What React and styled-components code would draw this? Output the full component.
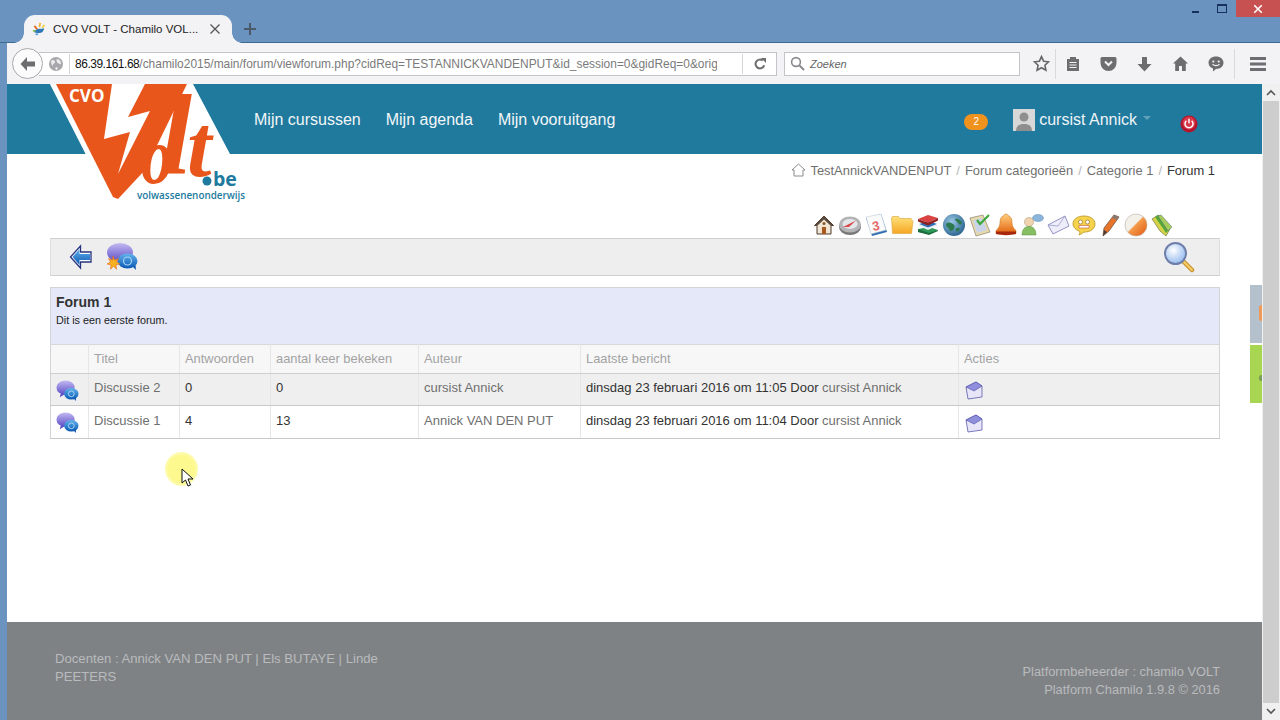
import React from 'react';
import styled, { createGlobalStyle } from 'styled-components';

const GlobalStyle = createGlobalStyle`
  html, body {
    margin: 0;
    height: 100%;
    overflow: hidden;
    font-family: "Liberation Sans", Arial, sans-serif;
  }
`;

const Window = styled.div`
  position: relative;
  display: flex;
  flex-direction: column;
  width: 1280px;
  height: 720px;
  overflow: hidden;
  background: #6b93bf;
`;

const TitleBar = styled.div`
  display: flex;
  align-items: flex-end;
  height: 43px;
  padding-left: 7px;
  position: relative;
  border-bottom: 1px solid #3f6a8f;
  box-sizing: border-box;
`;

const Tab = styled.div`
  position: relative;
  display: flex;
  align-items: center;
  gap: 7px;
  box-sizing: border-box;
  width: 208px;
  height: 28px;
  margin-left: 17px;
  margin-bottom: -1px;
  padding: 0 11px 0 8px;
  background: #f3f3f6;
  border-radius: 11px 11px 0 0;
  font-size: 11.5px;
  color: #222;
  white-space: nowrap;

  &::before,
  &::after {
    content: '';
    position: absolute;
    bottom: 0;
    width: 10px;
    height: 10px;
  }

  &::before {
    left: -10px;
    background: radial-gradient(circle at 0 0, transparent 9.5px, #f3f3f6 10px);
  }

  &::after {
    right: -10px;
    background: radial-gradient(circle at 100% 0, transparent 9.5px, #f3f3f6 10px);
  }
`;

const TabTitle = styled.span`
  flex: 1;
`;

const NewTab = styled.div`
  display: flex;
  align-items: center;
  justify-content: center;
  width: 20px;
  height: 28px;
  margin-left: 8px;
  margin-bottom: -1px;
`;

const WindowControls = styled.div`
  position: absolute;
  top: 0;
  right: 0;
  display: flex;
  align-items: flex-start;
`;

const WindowButton = styled.div`
  display: flex;
  align-items: center;
  justify-content: center;
  width: ${props => props.$wide ? '44px' : '27px'};
  height: 17px;
  background: ${props => props.$wide ? '#c75050' : 'transparent'};
`;

const Toolbar = styled.div`
  display: flex;
  align-items: center;
  height: 41px;
  margin-left: 7px;
  padding-left: 5px;
  background: #f3f3f6;
  box-sizing: border-box;
  flex-shrink: 0;
`;

const BackButton = styled.div`
  display: flex;
  align-items: center;
  justify-content: center;
  width: 31px;
  height: 31px;
  flex-shrink: 0;
  box-sizing: border-box;
  border: 1px solid #a9a9ad;
  border-radius: 50%;
  background: #fbfbfc;
  z-index: 1;
`;

const UrlBar = styled.div`
  display: flex;
  align-items: center;
  box-sizing: border-box;
  width: 738px;
  height: 24px;
  flex-shrink: 0;
  margin-left: -4px;
  padding-left: 10px;
  background: #fff;
  border: 1px solid #c4c4c8;
  border-left: 0;
`;

const UrlText = styled.div`
  flex: 1;
  min-width: 0;
  margin-left: 6px;
  padding: 0 25px 0 5px;
  border-left: 1px solid #d5d5d8;
  height: 20px;
  line-height: 20px;
  font-size: 11.95px;
  color: #7a7a7a;
  white-space: nowrap;
  overflow: hidden;
`;

const UrlClip = styled.div`
  overflow: hidden;
`;

const UrlHost = styled.span`
  color: #111;
  letter-spacing: -0.45px;
`;

const Reload = styled.div`
  display: flex;
  align-items: center;
  justify-content: center;
  width: 33px;
  height: 20px;
  flex-shrink: 0;
  border-left: 1px solid #d5d5d8;
`;

const SearchBox = styled.div`
  display: flex;
  align-items: center;
  gap: 5px;
  box-sizing: border-box;
  width: 236px;
  height: 24px;
  flex-shrink: 0;
  margin-left: 7px;
  padding-left: 5px;
  background: #fff;
  border: 1px solid #c4c4c8;
  font-size: 11px;
  font-style: italic;
  color: #666;
`;

const ToolIcons = styled.div`
  display: flex;
  align-items: center;
  flex-shrink: 0;
  margin-left: 7px;
`;

const ToolIcon = styled.div`
  display: flex;
  align-items: center;
  justify-content: center;
  width: ${props => props.$w || 36}px;
  height: 30px;
  border-left: ${props => props.$sep ? '1px solid #d9d9dc' : '0'};
  box-sizing: border-box;
`;

const Content = styled.div`
  display: flex;
  flex: 1;
  min-height: 0;
  margin-left: 7px;
`;

const Page = styled.div`
  position: relative;
  display: flex;
  flex-direction: column;
  flex: 1;
  min-width: 0;
  background: #fff;
`;

const Nav = styled.nav`
  display: flex;
  align-items: center;
  box-sizing: border-box;
  height: 70px;
  flex-shrink: 0;
  padding: 2px 0 0 247px;
  background: #207a9e;
  color: #fff;
`;

const NavLink = styled.a`
  margin-right: 25px;
  font-size: 16px;
  color: #f2f6f8;
`;

const NavRight = styled.div`
  display: flex;
  align-items: center;
  margin-left: auto;
  margin-right: 64px;
  height: 24px;
`;

const Badge = styled.span`
  display: flex;
  align-items: center;
  justify-content: center;
  width: 24px;
  height: 16px;
  margin-right: 25px;
  margin-top: 3px;
  border-radius: 8px;
  background: #f0921e;
  font-size: 10px;
  color: #fff;
`;

const Avatar = styled.div`
  display: flex;
  align-items: flex-end;
  justify-content: center;
  width: 22px;
  height: 22px;
  overflow: hidden;
  background: #d8d8d8;
  margin-right: 4px;
`;

const UserName = styled.span`
  font-size: 16px;
  color: #eef4f7;
`;

const Caret = styled.span`
  width: 0;
  height: 0;
  margin: 0 29px 4px 6px;
  border: 4px solid transparent;
  border-top-color: #5f9fb9;
  border-bottom: 0;
`;

const PowerButton = styled.div`
  display: flex;
  margin-top: 7px;
`;

const LogoLink = styled.a`
  position: absolute;
  left: 43px;
  top: 0;
  display: block;
  line-height: 0;
`;

const Main = styled.main`
  display: flex;
  flex-direction: column;
  flex: 1;
  padding: 0 42px 0 43px;
`;

const Breadcrumb = styled.div`
  display: flex;
  align-items: center;
  justify-content: flex-end;
  height: 32px;
  padding-right: 5px;
  font-size: 12.9px;
  color: #6f6f6f;
`;

const CrumbHome = styled.svg`
  margin-right: 4px;
`;

const Crumb = styled.span`
  color: ${props => props.$active ? '#333' : '#6f6f6f'};
`;

const CrumbSep = styled.span`
  margin: 0 5px;
  color: #b5b5b5;
`;

const CourseTools = styled.div`
  display: flex;
  justify-content: flex-end;
  gap: 2px;
  margin-top: 27px;
  height: 25px;
  padding-right: 46px;
`;

const ActionBar = styled.div`
  display: flex;
  align-items: center;
  height: 38px;
  box-sizing: border-box;
  padding: 0 24px 0 18px;
  gap: 12px;
  background: #eeeeef;
  border: 1px solid #cfcfcf;
  border-left-color: #dedede;
  border-right-color: #dedede;
`;

const ActionSearch = styled.div`
  margin-left: auto;
  display: flex;
`;

const ForumHead = styled.div`
  box-sizing: border-box;
  height: 57px;
  margin-top: 11px;
  padding: 6px 5px;
  background: #e4e8f8;
  border: 1px solid #d4d4d8;
  border-bottom: 0;
`;

const ForumTitle = styled.div`
  font-size: 14px;
  font-weight: bold;
  line-height: 16px;
  color: #333;
`;

const ForumText = styled.div`
  margin-top: 4px;
  font-size: 10.8px;
  line-height: 12px;
  color: #222;
`;

const Table = styled.table`
  width: calc(100% - 1px);
  table-layout: fixed;
  border-collapse: collapse;
  font-size: 13px;
`;

const Th = styled.th`
  box-sizing: border-box;
  height: 29px;
  padding: 0 5px 2px;
  text-align: left;
  font-weight: normal;
  font-size: 12.9px;
  color: #a3a3a3;
  background: #f7f7f8;
  border: 1px solid #e6e6e6;
  border-top: 1px solid #d8d8dc;
  border-bottom: 1px solid #cfcfcf;
  white-space: nowrap;
  &:first-child { border-left: 1px solid #d4d4d8; }
  &:last-child { border-right: 1px solid #d4d4d8; }
`;

const Tr = styled.tr`
  background: ${props => props.$odd ? '#efefef' : '#ffffff'};
`;

const Td = styled.td`
  box-sizing: border-box;
  height: ${props => props.$h}px;
  padding: 0 5px 4px;
  color: ${props => props.$link ? '#6f6f6f' : '#333'};
  border: 1px solid #e6e6e6;
  border-bottom: 1px solid #c9c9c9;
  white-space: nowrap;
  &:first-child { border-left: 1px solid #d4d4d8; }
  &:last-child { border-right: 1px solid #d4d4d8; }
`;

const MutedLink = styled.span`
  color: #6f6f6f;
`;

const RowIcon = styled.div`
  display: flex;
  margin-top: 3px;
  margin-bottom: -2px;
  margin-left: ${props => props.$ml || 0}px;
`;

const Footer = styled.footer`
  display: flex;
  justify-content: space-between;
  height: 98px;
  flex-shrink: 0;
  box-sizing: border-box;
  padding: 28px 42px 0 48px;
  background: #7f8285;
  line-height: 18px;
  color: #b9bbbd;
`;

const FooterLeft = styled.div`
  width: 340px;
  font-size: 13.15px;
`;

const FooterRight = styled.div`
  margin-top: 13px;
  font-size: 12.85px;
  text-align: right;
`;

const SideTab = styled.div`
  position: absolute;
  right: 0;
  top: ${props => props.$top}px;
  width: 12px;
  height: 58px;
  overflow: hidden;
  background: ${props => props.$bg};
`;

const SideMark = styled.div`
  position: absolute;
  left: 9px;
  top: ${props => props.$top}px;
  width: 5px;
  height: ${props => props.$h}px;
  border-radius: 3px;
  background: ${props => props.$bg};
`;

const Scrollbar = styled.div`
  display: flex;
  flex-direction: column;
  width: 18px;
  flex-shrink: 0;
  background: #f0f0f0;
`;

const ScrollArrow = styled.div`
  display: flex;
  align-items: center;
  justify-content: center;
  height: 17px;
  flex-shrink: 0;
  background: #f0f0f0;
`;

const ScrollThumb = styled.div`
  flex: 1;
  margin: 0 1px;
  background: #cdcdcd;
`;

const Highlight = styled.div`
  position: absolute;
  left: 165px;
  top: 452px;
  width: 33px;
  height: 34px;
  border-radius: 50%;
  background: radial-gradient(circle, #fdf98e 0%, #fdf98e 55%, rgba(253, 249, 142, 0) 100%);
`;

const Pointer = styled.svg`
  position: absolute;
  left: 181px;
  top: 468px;
`;

const HiddenDefs = styled.svg`
  position: absolute;
  width: 0;
  height: 0;
`;

const Defs = () => (
  <HiddenDefs aria-hidden="true">
    <defs>
      <linearGradient id="purple" x1="0" y1="0" x2="0" y2="1">
        <stop offset="0" stopColor="#c3b9f3" />
        <stop offset="1" stopColor="#5b4ec4" />
      </linearGradient>
      <linearGradient id="blue" x1="0" y1="0" x2="0" y2="1">
        <stop offset="0" stopColor="#62b2ec" />
        <stop offset="1" stopColor="#0b58b4" />
      </linearGradient>
      <radialGradient id="globe" cx="0.4" cy="0.35" r="0.75">
        <stop offset="0" stopColor="#9cc8e6" />
        <stop offset="1" stopColor="#1f5a86" />
      </radialGradient>
      <radialGradient id="lens" cx="0.4" cy="0.35" r="0.7">
        <stop offset="0" stopColor="#ffffff" />
        <stop offset="1" stopColor="#8fb6ee" />
      </radialGradient>
      <linearGradient id="folder" x1="0" y1="0" x2="0" y2="1">
        <stop offset="0" stopColor="#ffe27a" />
        <stop offset="1" stopColor="#f5a623" />
      </linearGradient>
      <linearGradient id="bell" x1="0" y1="0" x2="0" y2="1">
        <stop offset="0" stopColor="#ffd080" />
        <stop offset="1" stopColor="#e2630f" />
      </linearGradient>
      <linearGradient id="ball" x1="0" y1="0" x2="1" y2="1">
        <stop offset="0.45" stopColor="#f3efe9" />
        <stop offset="0.5" stopColor="#f39a4a" />
        <stop offset="1" stopColor="#e2570f" />
      </linearGradient>
    </defs>
  </HiddenDefs>
);

const Logo = () => (
  <svg width="200" height="120" viewBox="0 0 200 120">
    <polygon points="0,0 143,0 180,70 63,70 63,118" fill="#fff" />
    <polygon points="0,0 60,118 63,70" fill="#fff" />
    <polygon points="6,0 137,0 95,86 68,115 63,113" fill="#e8561c" />
    <polygon points="62,0 95,0 78,33 100,27 68,90 80,48 54,55" fill="#fff" />
    <text x="19" y="18" fontFamily="'Open Sans', sans-serif" fontWeight="700" fontSize="17" fill="#fff">CVO</text>
    <ellipse cx="109" cy="81" rx="9" ry="15" fill="#fff" transform="rotate(12 109 81)" />
    <g fontFamily="'Liberation Serif', serif" fontStyle="italic" fill="#e8561c">
      <text transform="translate(91 99) scale(0.8 1)" fontWeight="700" fontSize="80">o</text>
      <text x="110" y="90" fontWeight="700" fontSize="115">l</text>
      <text x="137" y="92" fontWeight="700" fontSize="88">t</text>
    </g>
    <circle cx="157" cy="97" r="4.5" fill="#207a9e" />
    <text x="163" y="102" fontFamily="'Open Sans', sans-serif" fontWeight="700" fontSize="19.5" fill="#207a9e">be</text>
    <text x="87" y="115" fontFamily="'Open Sans', sans-serif" fontWeight="600" fontSize="9.9" fill="#207a9e">volwassenenonderwijs</text>
  </svg>
);

const Favicon = () => (
  <svg width="14" height="14" viewBox="0 0 16 16">
    <path d="M2 11c2-3 6-4 9-3 1-1 2-1 3 0-1 1-1 3-3 4-3 1-6 1-9-1z" fill="#2d78b8" />
    <rect x="8" y="1" width="2" height="5" fill="#f2b632" transform="rotate(10 9 3)" />
    <rect x="3" y="4" width="2" height="5" fill="#e8641c" transform="rotate(-40 4 6)" />
    <rect x="12" y="3" width="2" height="4" fill="#f2d032" transform="rotate(40 13 5)" />
    <rect x="1" y="9" width="3" height="2" fill="#8bc34a" />
    <rect x="4" y="13" width="3" height="2" fill="#5aa0d8" />
  </svg>
);

const Close = ({ size = 12, color = '#555', width = 1.3 }) => (
  <svg width={size} height={size} viewBox="0 0 12 12">
    <path d="M1.5 1.5l9 9M10.5 1.5l-9 9" stroke={color} strokeWidth={width} fill="none" />
  </svg>
);

const Back = () => (
  <svg width="18" height="16" viewBox="0 0 18 16">
    <path d="M8 1L1.5 8 8 15V10.5h8v-5H8z" fill="#6d6d70" />
  </svg>
);

const GlobeSmall = () => (
  <svg width="14" height="14" viewBox="0 0 14 14">
    <circle cx="7" cy="7" r="7" fill="#a8a8ac" />
    <path d="M2 4c2-2 4-1 4 1s-2 1-2 3-2 0-2-4zM8 2c3 0 4 3 4 5-2 1-2-1-3-1S7 3 8 2zM7 10c2 0 2 1 1 3-2 0-2-2-1-3z" fill="#ececee" />
  </svg>
);

const ReloadIcon = () => (
  <svg width="14" height="14" viewBox="0 0 14 14">
    <path d="M11.2 8.2A4.4 4.4 0 1 1 9.8 3.6" stroke="#6d6d70" strokeWidth="2" fill="none" />
    <path d="M8 1h5v5z" fill="#6d6d70" />
  </svg>
);

const SearchGlass = () => (
  <svg width="15" height="15" viewBox="0 0 15 15">
    <circle cx="6" cy="6" r="4.4" stroke="#8a8a8e" strokeWidth="1.6" fill="none" />
    <path d="M9.5 9.5l4.5 4.5" stroke="#8a8a8e" strokeWidth="2" />
  </svg>
);

const StarIcon = () => (
  <svg width="17" height="17" viewBox="0 0 17 17">
    <path d="M8.5 1.6l2.1 4.6 5 .6-3.7 3.4 1 5-4.4-2.5-4.4 2.5 1-5L1.4 6.8l5-.6z" stroke="#666" strokeWidth="1.6" fill="none" />
  </svg>
);

const ReaderIcon = () => (
  <svg width="14" height="16" viewBox="0 0 14 16">
    <path d="M1 3h3V1h6v2h3v12H1z" fill="#6d6d70" />
    <path d="M3.5 6.5h7M3.5 9h7M3.5 11.5h7" stroke="#f3f3f6" strokeWidth="1" />
  </svg>
);

const PocketIcon = () => (
  <svg width="17" height="15" viewBox="0 0 16 15">
    <path d="M1.5 1h13A1.5 1.5 0 0 1 16 2.500V7a8 8 0 0 1-16 0V2.500A1.500 1.500 0 0 1 1.500 1z" fill="#6d6d70" />
    <path d="M4.500 5.500L8 9l3.500-3.500" stroke="#f3f3f6" strokeWidth="2" fill="none" />
  </svg>
);

const DownloadIcon = () => (
  <svg width="15" height="16" viewBox="0 0 14 16">
    <path d="M4.500 1h5v7H14l-7 7.500L0 8h4.500z" fill="#6d6d70" />
  </svg>
);

const HomeIcon = () => (
  <svg width="15" height="15" viewBox="0 0 15 15">
    <path d="M7.500 .5L15 7.500h-2.200V15H9V10H6v5H2.200V7.500H0z" fill="#6d6d70" />
  </svg>
);

const HelloIcon = () => (
  <svg width="16" height="16" viewBox="0 0 16 16">
    <path d="M8 .5c4.400 0 7.500 2.700 7.500 6.300S12.400 13 8 13l-3 2.500V12.400C2 11.500 .5 9.400 .5 6.800 .5 3.200 3.600.5 8 .5z" fill="#6d6d70" />
    <circle cx="5.300" cy="5.500" r="1.100" fill="#f3f3f6" />
    <circle cx="10.700" cy="5.500" r="1.100" fill="#f3f3f6" />
    <path d="M4.500 8.200c1.800 1.800 5.200 1.800 7 0" stroke="#f3f3f6" strokeWidth="1.200" fill="none" />
  </svg>
);

const MenuIcon = () => (
  <svg width="16" height="14" viewBox="0 0 16 14">
    <path d="M0 0h16v3H0zM0 5.500h16v3H0zM0 11h16v3H0z" fill="#6d6d70" />
  </svg>
);

const PowerIcon = () => (
  <svg width="18" height="18" viewBox="0 0 18 18">
    <circle cx="9" cy="9" r="8.500" fill="#b3142c" />
    <circle cx="9" cy="8" r="6.500" fill="#d8384a" />
    <path d="M6.400 5.800a4 4 0 1 0 5.200 0" stroke="#fff" strokeWidth="1.500" fill="none" />
    <path d="M9 3.800v4.400" stroke="#fff" strokeWidth="1.500" />
  </svg>
);

const HomeTool = () => (
  <svg width="24" height="24" viewBox="0 0 24 24">
    <path d="M12 3L2.500 12.500h2.500V21h14v-8.500h2.500z" fill="#f1e6d4" stroke="#4a3a2c" strokeWidth="1" />
    <path d="M12 3L2.500 12.500h3L12 6.500l6.500 6h3z" fill="#5c4a3a" />
    <rect x="10" y="14" width="4" height="7" fill="#a85a1e" />
    <circle cx="12" cy="10.500" r="1.500" fill="#8a5a2e" />
  </svg>
);

const CompassTool = () => (
  <svg width="24" height="24" viewBox="0 0 24 24">
    <ellipse cx="12" cy="14" rx="11" ry="8" fill="#77777a" />
    <ellipse cx="12" cy="11.500" rx="11" ry="8" fill="#b4b4b6" />
    <ellipse cx="12" cy="11" rx="7.500" ry="5" fill="#e4e7ea" />
    <path d="M5 14l13-6.500-7 6.500z" fill="#d64a4a" />
  </svg>
);

const CalendarTool = () => (
  <svg width="24" height="24" viewBox="0 0 24 24">
    <polygon points="2,5 17,1 23,19 8,23" fill="#2f6fb0" />
    <polygon points="2,4 17,1 22,17 7,21" fill="#fafafa" stroke="#b9c6d6" strokeWidth=".5" />
    <text x="8" y="17" fontFamily="'Liberation Sans', sans-serif" fontWeight="700" fontSize="13" fill="#e46a6a" transform="rotate(-12 13 12)">3</text>
  </svg>
);

const FolderTool = () => (
  <svg width="24" height="24" viewBox="0 0 24 24">
    <path d="M1.500 5l1-1.500h6L10 5.500l11 0 2 3-1.500 12-19 0z" fill="url(#folder)" stroke="#d9a13a" strokeWidth=".6" />
  </svg>
);

const BooksTool = () => (
  <svg width="24" height="24" viewBox="0 0 24 24">
    <path d="M2 16l11-2 9 3-9 4-11-2z" fill="#2f9a58" />
    <path d="M2 16v3l11 3 9-4v-1l-9 3z" fill="#1b6d3d" />
    <path d="M3 11l10-3 8 3-9 5z" fill="#2d6fb5" />
    <path d="M3 11v2l9 4 9-4v-2l-9 3.500z" fill="#e9eef2" />
    <path d="M2 6l10-4 10 3-10 5z" fill="#d94343" />
    <path d="M2 6v2.500l10 4 10-5V5l-10 5z" fill="#8f1f1f" />
  </svg>
);

const GlobeTool = () => (
  <svg width="24" height="24" viewBox="0 0 24 24">
    <circle cx="12" cy="12" r="11" fill="url(#globe)" />
    <path d="M4 11c3-3 5-1 7 0s2 4 0 6-3 1-4-1-3-2-3-5zM13 6c3-1 6 1 7 4-1 2-3 2-4 0s-3-2-3-4zM15 15c2 0 3 0 3 1-1 2-3 3-4 2s0-3 1-3z" fill="#2c7a4e" />
  </svg>
);

const CheckTool = () => (
  <svg width="24" height="24" viewBox="0 0 24 24">
    <polygon points="2,5 15,2 22,19 8,23" fill="#e8d9a8" stroke="#8a8276" strokeWidth=".7" />
    <polygon points="5,7 14,5 19,17 9,20" fill="#c9d3ea" />
    <path d="M9 7l3 4 9-9" stroke="#3fa83f" strokeWidth="2.200" fill="none" />
  </svg>
);

const BellTool = () => (
  <svg width="24" height="24" viewBox="0 0 24 24">
    <path d="M12 1c1.500 0 2 1 2 1.500 3 1 4 3.500 4 7 0 3.500 1.500 6 4 8v3H2v-3c2.500-2 4-4.500 4-8 0-3.500 1-6 4-7C10 2 10.500 1 12 1z" fill="url(#bell)" stroke="#c2670f" strokeWidth=".5" />
    <path d="M2 18.500h20v2.500c-6 1.500-14 1.500-20 0z" fill="#a8260c" />
  </svg>
);

const UserTool = () => (
  <svg width="24" height="24" viewBox="0 0 24 24">
    <ellipse cx="18" cy="5" rx="5.500" ry="3.500" fill="#8ab6dc" stroke="#5a86ac" strokeWidth=".5" />
    <circle cx="9" cy="9" r="4.500" fill="#f0d4b0" stroke="#a88c6a" strokeWidth=".5" />
    <path d="M2 22c0-6 3-8.500 7-8.500s7 2.500 7 8.500z" fill="#86bf62" stroke="#5a8c3c" strokeWidth=".5" />
  </svg>
);

const MailTool = () => (
  <svg width="24" height="24" viewBox="0 0 24 24">
    <polygon points="2,12 19,3 23,13 7,21" fill="#eeeefa" stroke="#7b7bb5" strokeWidth=".8" />
    <path d="M2 12l10 1 7-10" stroke="#9a9ace" strokeWidth=".8" fill="none" />
  </svg>
);

const ChatTool = () => (
  <svg width="24" height="24" viewBox="0 0 24 24">
    <path d="M12 3c6 0 11 3 11 8s-5 8-10 8c-2 0-3 2-6 3 1-2 1-3 0-4-3-1-6-4-6-7 0-5 5-8 11-8z" fill="#f5d34a" stroke="#b88f1e" strokeWidth=".8" />
    <circle cx="8.500" cy="9" r="2" fill="#fff" stroke="#8a5a1e" strokeWidth=".6" />
    <circle cx="15.500" cy="9" r="2" fill="#fff" stroke="#8a5a1e" strokeWidth=".6" />
    <path d="M7 12.500h10v2.500H7z" fill="#fff" stroke="#c8503a" strokeWidth=".6" />
  </svg>
);

const PencilTool = () => (
  <svg width="24" height="24" viewBox="0 0 24 24">
    <polygon points="5,23 6,15 16,2 21,4 11,18" fill="#e8742a" stroke="#70584a" strokeWidth=".8" />
    <polygon points="16,2 21,4 19,7 14,5" fill="#8a7a70" />
    <polygon points="5,23 6,17 9,19" fill="#4a3a34" />
  </svg>
);

const BallTool = () => (
  <svg width="24" height="24" viewBox="0 0 24 24">
    <circle cx="12" cy="12" r="11" fill="url(#ball)" stroke="#b8b0a8" strokeWidth=".6" />
  </svg>
);

const TagsTool = () => (
  <svg width="24" height="24" viewBox="0 0 24 24">
    <polygon points="2,6 8,2 14,14 20,16 16,23 10,18" fill="#d7d24a" stroke="#5a6a30" strokeWidth=".6" />
    <polygon points="5,4 9,2 18,14 20,16 16,20 12,14" fill="#56a83a" />
    <polygon points="8,3 11,2 22,14 18,18" fill="#a8cc5a" stroke="#4d6a78" strokeWidth=".5" />
  </svg>
);

const courseTools = [
  HomeTool, CompassTool, CalendarTool, FolderTool, BooksTool, GlobeTool, CheckTool,
  BellTool, UserTool, MailTool, ChatTool, PencilTool, BallTool, TagsTool,
];

const BackArrow = () => (
  <svg width="24" height="26" viewBox="0 0 24 26">
    <path d="M11.500 2L1.500 13l10 11v-6H22V8H11.500z" fill="#fff" stroke="#26337f" strokeWidth="1.300" />
    <path d="M10.500 5L3.500 13l7 8v-5H21v-6H10.500z" fill="url(#blue)" />
  </svg>
);

const Bubbles = ({ size }) => (
  <svg width={size} height={size} viewBox="0 0 24 24">
    <ellipse cx="10" cy="9" rx="9.500" ry="7.500" fill="url(#purple)" />
    <path d="M5 15l-1 4 5-3z" fill="#5b4ec4" />
    <ellipse cx="16" cy="15.500" rx="7.500" ry="6" fill="url(#blue)" />
    <path d="M18 20l3 3-.5-4z" fill="#0b58b4" />
    <circle cx="16" cy="15.500" r="3" fill="none" stroke="#a8d4f5" strokeWidth="1" />
  </svg>
);

const NewThread = () => (
  <svg width="33" height="30" viewBox="0 0 33 30">
    <ellipse cx="15" cy="10.500" rx="13" ry="9.500" fill="url(#purple)" />
    <ellipse cx="22.500" cy="19" rx="10" ry="7.500" fill="url(#blue)" />
    <path d="M28 25l3 3-.5-5z" fill="#0b58b4" />
    <circle cx="22.500" cy="19" r="4" fill="none" stroke="#a8d4f5" strokeWidth="1.200" />
    <path d="M8 14l1.500 4 4-1.500-2 3.500 3.500 2-4 .8.500 4.500-3-3-3 3 .500-4.500-4-.8 3.500-2-2-3.500 4 1.500z" fill="#f5b21e" stroke="#e8641c" strokeWidth=".6" />
  </svg>
);

const Magnifier = () => (
  <svg width="32" height="32" viewBox="0 0 32 32">
    <path d="M19 19l10 10" stroke="#c8902e" strokeWidth="4.500" strokeLinecap="round" />
    <path d="M19.500 19.500l9.500 9.500" stroke="#f5d06a" strokeWidth="2" strokeLinecap="round" />
    <circle cx="12.500" cy="12.500" r="10.500" fill="url(#lens)" stroke="#6d7fa8" strokeWidth="2" />
  </svg>
);

const ReplyMail = () => (
  <svg width="20" height="20" viewBox="0 0 20 20">
    <polygon points="2,7 12,2 18,6 18,17 4,19" fill="#e6e6f8" stroke="#5a5ab0" strokeWidth=".8" />
    <polygon points="2,7 10,11 18,6 12,2" fill="#8f8fdc" stroke="#4d4da8" strokeWidth=".6" />
  </svg>
);

const columns = [38, 91, 91, 148, 162, 378, 261];

const headers = ['', 'Titel', 'Antwoorden', 'aantal keer bekeken', 'Auteur', 'Laatste bericht', 'Acties'];

const threads = [
  { title: 'Discussie 2', replies: 0, views: 0, author: 'cursist Annick', time: '11:05', height: 32 },
  { title: 'Discussie 1', replies: 4, views: 13, author: 'Annick VAN DEN PUT', time: '11:04', height: 33 },
];

const App = () => (
  <Window>
    <GlobalStyle />
    <Defs />
    <TitleBar>
      <Tab>
        <Favicon />
        <TabTitle>CVO VOLT - Chamilo VOL...</TabTitle>
        <Close />
      </Tab>
      <NewTab>
        <svg width="14" height="14" viewBox="0 0 14 14">
          <path d="M7 1v12M1 7h12" stroke="#4a5a6a" strokeWidth="2" />
        </svg>
      </NewTab>
      <WindowControls>
        <WindowButton>
          <svg width="10" height="10" viewBox="0 0 10 10"><rect x="1" y="7" width="7" height="2" fill="#17305c" /></svg>
        </WindowButton>
        <WindowButton>
          <svg width="11" height="10" viewBox="0 0 11 10"><rect x=".5" y=".5" width="9" height="8" fill="none" stroke="#17305c" /><rect x="0" y="0" width="10" height="2" fill="#17305c" /></svg>
        </WindowButton>
        <WindowButton $wide>
          <Close size={10} color="#fff" width={2} />
        </WindowButton>
      </WindowControls>
    </TitleBar>
    <Toolbar>
      <BackButton><Back /></BackButton>
      <UrlBar>
        <GlobeSmall />
        <UrlText>
          <UrlClip>
            <UrlHost>86.39.161.68</UrlHost>/chamilo2015/main/forum/viewforum.php?cidReq=TESTANNICKVANDENPUT&amp;id_session=0&amp;gidReq=0&amp;orig
          </UrlClip>
        </UrlText>
        <Reload><ReloadIcon /></Reload>
      </UrlBar>
      <SearchBox>
        <SearchGlass />
        Zoeken
      </SearchBox>
      <ToolIcons>
        <ToolIcon $w={28}><StarIcon /></ToolIcon>
        <ToolIcon $w={35} $sep><ReaderIcon /></ToolIcon>
        <ToolIcon><PocketIcon /></ToolIcon>
        <ToolIcon><DownloadIcon /></ToolIcon>
        <ToolIcon><HomeIcon /></ToolIcon>
        <ToolIcon><HelloIcon /></ToolIcon>
        <ToolIcon $w={46} $sep><MenuIcon /></ToolIcon>
      </ToolIcons>
    </Toolbar>
    <Content>
      <Page>
        <Nav>
          <NavLink>Mijn cursussen</NavLink>
          <NavLink>Mijn agenda</NavLink>
          <NavLink>Mijn vooruitgang</NavLink>
          <NavRight>
            <Badge>2</Badge>
            <Avatar>
              <svg width="22" height="22" viewBox="0 0 22 22">
                <circle cx="11" cy="8" r="4.500" fill="#8f8f8f" />
                <path d="M3 22c0-6 4-7 8-7s8 1 8 7z" fill="#8f8f8f" />
              </svg>
            </Avatar>
            <UserName>cursist Annick</UserName>
            <Caret />
            <PowerButton><PowerIcon /></PowerButton>
          </NavRight>
        </Nav>
        <LogoLink><Logo /></LogoLink>
        <Main>
          <Breadcrumb>
            <CrumbHome width="15" height="14" viewBox="0 0 15 14">
              <path d="M7.500 1L1 7h2v6h9V7h2z" fill="none" stroke="#8c8c8c" />
            </CrumbHome>
            <Crumb>TestAnnickVANDENPUT</Crumb>
            <CrumbSep>/</CrumbSep>
            <Crumb>Forum categorieën</Crumb>
            <CrumbSep>/</CrumbSep>
            <Crumb>Categorie 1</Crumb>
            <CrumbSep>/</CrumbSep>
            <Crumb $active>Forum 1</Crumb>
          </Breadcrumb>
          <CourseTools>
            {courseTools.map((Tool, i) => <Tool key={i} />)}
          </CourseTools>
          <ActionBar>
            <BackArrow />
            <NewThread />
            <ActionSearch><Magnifier /></ActionSearch>
          </ActionBar>
          <ForumHead>
            <ForumTitle>Forum 1</ForumTitle>
            <ForumText>Dit is een eerste forum.</ForumText>
          </ForumHead>
          <Table>
            <colgroup>
              {columns.map((w, i) => <col key={i} width={w} />)}
            </colgroup>
            <thead>
              <tr>{headers.map((h, i) => <Th key={i}>{h}</Th>)}</tr>
            </thead>
            <tbody>
              {threads.map((t, i) => (
                <Tr key={t.title} $odd={i === 0}>
                  <Td $h={t.height}><RowIcon><Bubbles size={23} /></RowIcon></Td>
                  <Td $h={t.height} $link>{t.title}</Td>
                  <Td $h={t.height}>{t.replies}</Td>
                  <Td $h={t.height}>{t.views}</Td>
                  <Td $h={t.height} $link>{t.author}</Td>
                  <Td $h={t.height}>dinsdag 23 februari 2016 om {t.time} Door <MutedLink>cursist Annick</MutedLink></Td>
                  <Td $h={t.height}><RowIcon><ReplyMail /></RowIcon></Td>
                </Tr>
              ))}
            </tbody>
          </Table>
        </Main>
        <Footer>
          <FooterLeft>Docenten : Annick VAN DEN PUT | Els BUTAYE | Linde PEETERS</FooterLeft>
          <FooterRight>
            Platformbeheerder : chamilo VOLT<br />
            Platform Chamilo 1.9.8 © 2016
          </FooterRight>
        </Footer>
        <SideTab $top={201} $bg="#b4c0cc"><SideMark $top={20} $h={16} $bg="#f09a5a" /></SideTab>
        <SideTab $top={261} $bg="#a8d652"><SideMark $top={30} $h={6} $bg="#7a9a5a" /></SideTab>
      </Page>
      <Scrollbar>
        <ScrollArrow>
          <svg width="10" height="7" viewBox="0 0 10 7"><path d="M1 6l4-4 4 4" stroke="#555" strokeWidth="1.600" fill="none" /></svg>
        </ScrollArrow>
        <ScrollThumb />
        <ScrollArrow>
          <svg width="10" height="7" viewBox="0 0 10 7"><path d="M1 1l4 4 4-4" stroke="#555" strokeWidth="1.600" fill="none" /></svg>
        </ScrollArrow>
      </Scrollbar>
    </Content>
    <Highlight />
    <Pointer width="14" height="20" viewBox="0 0 14 20">
      <path d="M1 1v14l3.500-3 2.500 6 2.500-1-2.500-6H12z" fill="#fff" stroke="#111" strokeWidth="1" />
    </Pointer>
  </Window>
);

export default App;
